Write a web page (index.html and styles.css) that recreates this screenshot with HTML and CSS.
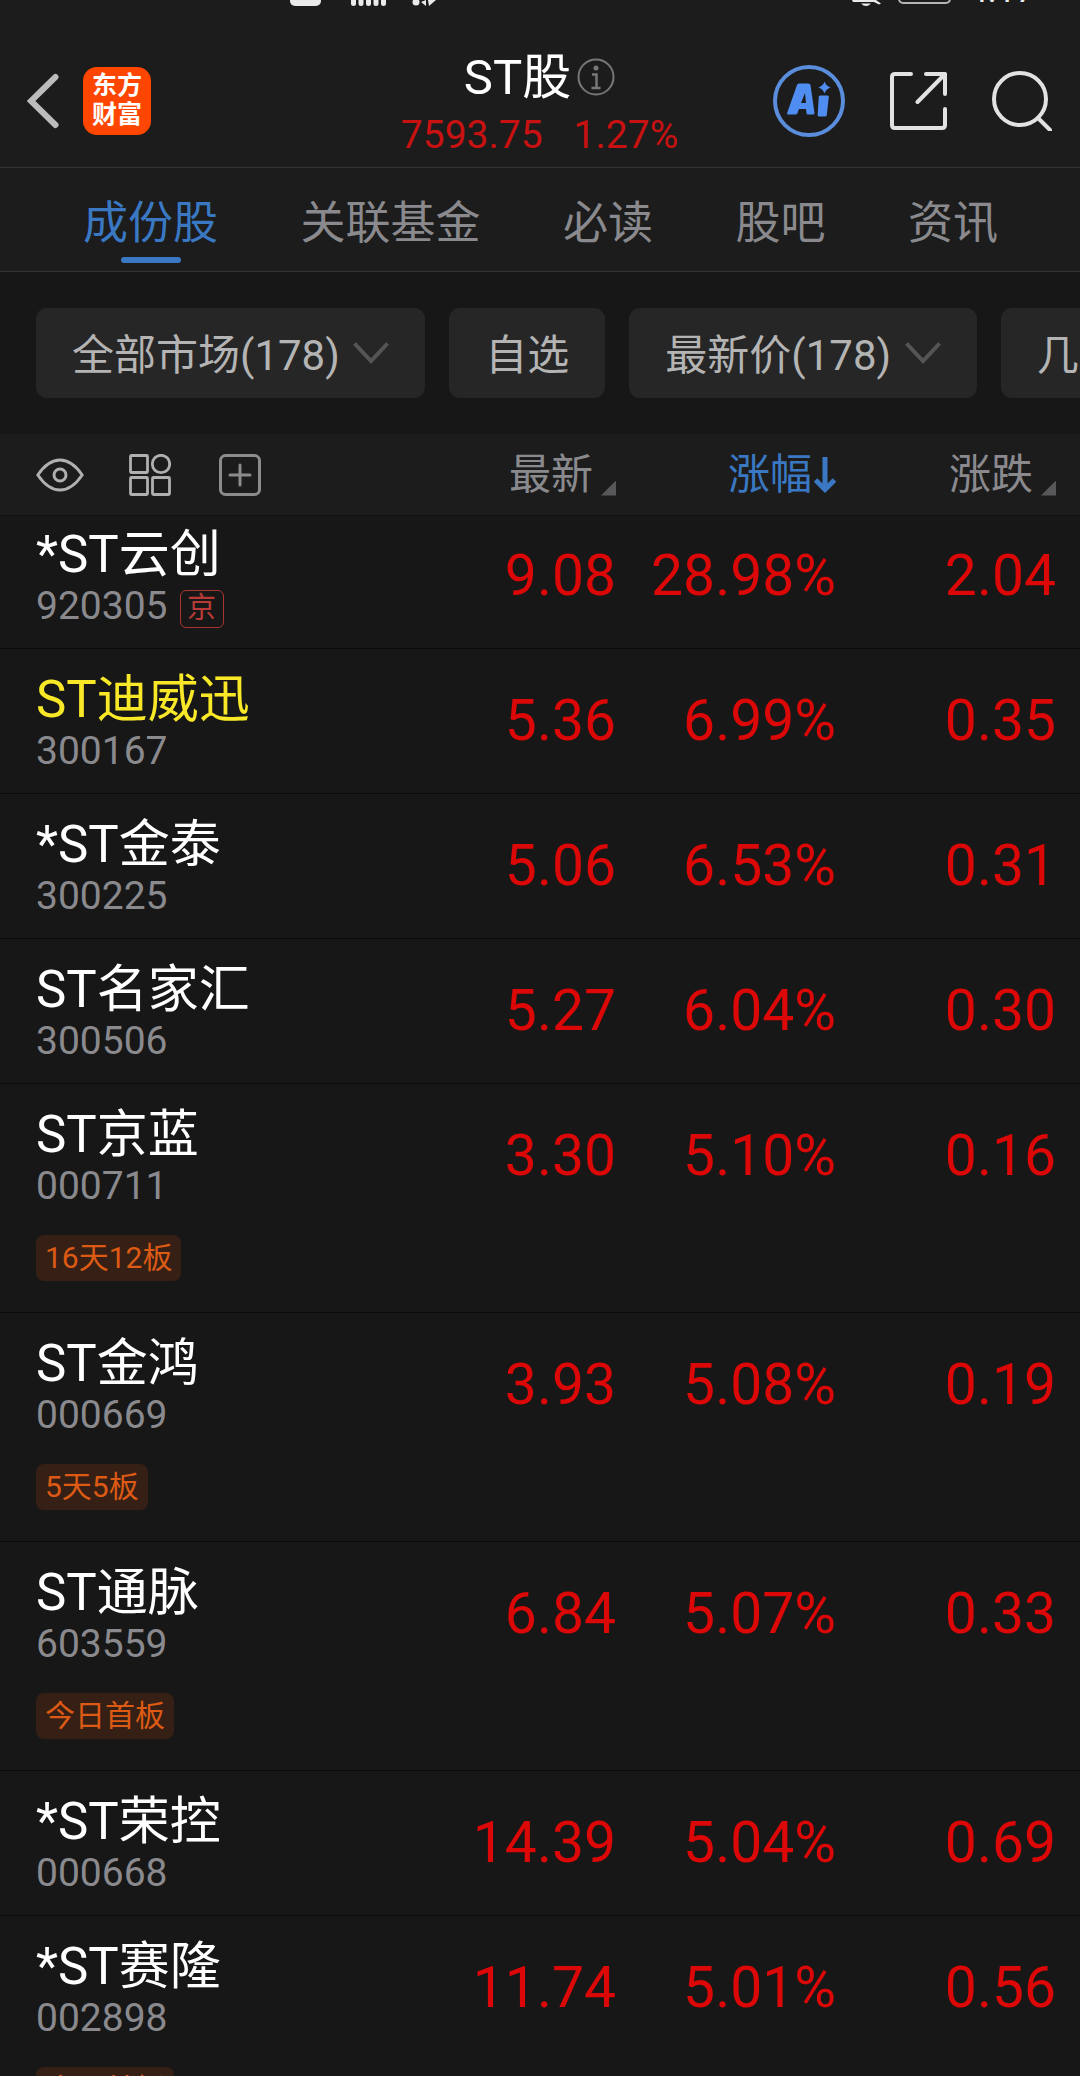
FILE: index.html
```html
<!DOCTYPE html>
<html lang="zh-CN">
<head>
    <meta charset="UTF-8">
    <title>ST股</title>
    <link rel="stylesheet" href="styles.css">
</head>
<body>

    <div class="statusbar">
        <svg class="status-left" width="160" height="10" viewBox="0 0 160 10">
            <rect x="0" y="-20" width="31" height="26" rx="5"/>
            <path d="M63.500 0v3.500M71 0v3.500M78.500 0v3.500M86 0v3.500M93.500 0v3.500" stroke="#eaeaea" stroke-width="5" stroke-linecap="round"/>
            <circle cx="126" cy="2" r="3.500"/>
            <path d="M131 2l5-2v6zM138 0h8l-7 6z"/>
        </svg>
        <svg class="status-right" width="102" height="10" viewBox="0 0 102 10">
            <path d="M0 0h24l5 3.500-2 1-5-2.500H1z"/>
            <path d="M9 3.500h10q-5 5-10 0z"/>
            <rect x="47" y="-20" width="51" height="23" rx="4" fill="none" stroke="#b5b5b5" stroke-width="2"/>
        </svg>
        <span class="clock">4:17</span>
    </div>

    <header class="header">
        <div class="header-left">
            <svg width="32" height="56" viewBox="0 0 32 56">
                <path d="M28.500 4L4 28l24.500 24" fill="none" stroke="#bcbcbc" stroke-width="6" stroke-linecap="round"/>
            </svg>
            <div class="logo"><span>东方</span><span>财富</span></div>
        </div>
        <div class="header-title">
            <div class="title">
                <span>ST股</span>
                <svg width="38" height="38" viewBox="0 0 38 38" fill="none" stroke="#777" stroke-width="2">
                    <circle cx="19" cy="19" r="17.500"/>
                    <circle cx="19" cy="10" r="2.500" fill="#777" stroke="none"/>
                    <path d="M15 16.500h4.500V30M14.500 30h9" stroke-width="2.500"/>
                </svg>
            </div>
            <div class="index"><span>7593.75</span><span>1.27%</span></div>
        </div>
        <div class="header-right">
            <svg width="74" height="74" viewBox="0 0 74 74">
                <circle cx="37" cy="37" r="34" fill="none" stroke="#5a8ddc" stroke-width="4"/>
                <path fill="#4f8df0" fill-rule="evenodd" d="M27 19.500h9.500q1.500 0 2 1.500l4 28q0 1.500-1.500 1.500h-5q-1.500 0-1.500-1.500l-.5-4h-7l-1.500 4q-.5 1.500-2 1.500h-7q-2 0-1.200-2L25 21q.5-1.500 2-1.500zM33 29l-4 10h5z"/>
                <path fill="#4f8df0" d="M48 31.500h7.500q1.500 0 1.300 1.500l-2 18q-.2 1.500-1.500 1.500H47q-1.500 0-1.300-1.500l1-18q.1-1.500 1.300-1.500zM52.500 17.500q1.500 4.500 6 6q-4.500 1.500-6 6q-1.500-4.500-6-6q4.500-1.500 6-6z"/>
            </svg>
            <svg width="58" height="58" viewBox="0 0 58 58" fill="none" stroke="#e2e2e2" stroke-width="4" stroke-linecap="round" stroke-linejoin="round">
                <path d="M21 2H5Q2 2 2 5V53Q2 56 5 56H52Q55 56 55 53V37"/>
                <path d="M36 2H55V22M55 2L27.500 30"/>
            </svg>
            <svg width="60" height="60" viewBox="0 0 60 60" fill="none" stroke="#e2e2e2" stroke-width="4" stroke-linecap="round">
                <circle cx="28" cy="28" r="26"/>
                <path d="M46 47l12 12"/>
            </svg>
        </div>
    </header>

    <nav class="tabs">
        <span class="tab active">成份股</span>
        <span class="tab">关联基金</span>
        <span class="tab">必读</span>
        <span class="tab">股吧</span>
        <span class="tab">资讯</span>
    </nav>

    <div class="filters">
        <div class="chip"><span>全部市场(178)</span>
            <svg width="36" height="22" viewBox="0 0 36 22"><path d="M1.500 1.500L18 19L34.500 1.500"/></svg>
        </div>
        <div class="chip"><span>自选</span></div>
        <div class="chip"><span>最新价(178)</span>
            <svg width="36" height="22" viewBox="0 0 36 22"><path d="M1.500 1.500L18 19L34.500 1.500"/></svg>
        </div>
        <div class="chip"><span>几</span></div>
    </div>

    <div class="row table-head">
        <div class="tools">
            <svg width="48" height="34" viewBox="0 0 48 34" fill="none" stroke="#b0b0b0" stroke-width="3">
                <path d="M1.800 17Q12 2 24 2T46.200 17Q36 32 24 32T1.800 17z" stroke-linejoin="round"/>
                <circle cx="24" cy="17" r="6"/>
            </svg>
            <svg width="42" height="42" viewBox="0 0 42 42" fill="none" stroke="#b0b0b0" stroke-width="2.800">
                <rect x="1.500" y="1.500" width="17" height="17" rx="1"/>
                <circle cx="32" cy="10" r="8.700"/>
                <rect x="1.500" y="23.500" width="17" height="17" rx="1"/>
                <rect x="23.500" y="23.500" width="17" height="17" rx="1"/>
            </svg>
            <svg class="add" width="42" height="42" viewBox="0 0 42 42" fill="none" stroke="#8c8c8c" stroke-width="3">
                <rect x="1.500" y="1.500" width="39" height="39" rx="5"/>
                <path d="M21 11v20M11 21h20" stroke-linecap="round"/>
            </svg>
        </div>
        <div class="col">最新<i class="corner"></i></div>
        <div class="col sorted">涨幅
            <svg width="22" height="36" viewBox="0 0 22 36" fill="none" stroke="#3a78c3" stroke-width="5">
                <path d="M11 0v32M1.500 23L11 32.500L20.500 23"/>
            </svg>
        </div>
        <div class="col">涨跌<i class="corner"></i></div>
    </div>

    <main class="list">
        <div class="row stock">
            <div class="info">
                <div class="name">*ST云创</div>
                <div class="code">920305<span class="market">京</span></div>
            </div>
            <div class="num">9.08</div>
            <div class="num">28.98%</div>
            <div class="num">2.04</div>
        </div>
        <div class="row stock">
            <div class="info">
                <div class="name own">ST迪威迅</div>
                <div class="code">300167</div>
            </div>
            <div class="num">5.36</div>
            <div class="num">6.99%</div>
            <div class="num">0.35</div>
        </div>
        <div class="row stock">
            <div class="info">
                <div class="name">*ST金泰</div>
                <div class="code">300225</div>
            </div>
            <div class="num">5.06</div>
            <div class="num">6.53%</div>
            <div class="num">0.31</div>
        </div>
        <div class="row stock">
            <div class="info">
                <div class="name">ST名家汇</div>
                <div class="code">300506</div>
            </div>
            <div class="num">5.27</div>
            <div class="num">6.04%</div>
            <div class="num">0.30</div>
        </div>
        <div class="row stock">
            <div class="info">
                <div class="name">ST京蓝</div>
                <div class="code">000711</div>
                <div class="tag">16天12板</div>
            </div>
            <div class="num">3.30</div>
            <div class="num">5.10%</div>
            <div class="num">0.16</div>
        </div>
        <div class="row stock">
            <div class="info">
                <div class="name">ST金鸿</div>
                <div class="code">000669</div>
                <div class="tag">5天5板</div>
            </div>
            <div class="num">3.93</div>
            <div class="num">5.08%</div>
            <div class="num">0.19</div>
        </div>
        <div class="row stock">
            <div class="info">
                <div class="name">ST通脉</div>
                <div class="code">603559</div>
                <div class="tag">今日首板</div>
            </div>
            <div class="num">6.84</div>
            <div class="num">5.07%</div>
            <div class="num">0.33</div>
        </div>
        <div class="row stock">
            <div class="info">
                <div class="name">*ST荣控</div>
                <div class="code">000668</div>
            </div>
            <div class="num">14.39</div>
            <div class="num">5.04%</div>
            <div class="num">0.69</div>
        </div>
        <div class="row stock">
            <div class="info">
                <div class="name">*ST赛隆</div>
                <div class="code">002898</div>
                <div class="tag">今日首板</div>
            </div>
            <div class="num">11.74</div>
            <div class="num">5.01%</div>
            <div class="num">0.56</div>
        </div>
    </main>

</body>
</html>
```
FILE: styles.css
```css
* {
    box-sizing: border-box;
}

body {
    margin: 0;
    height: 2076px;
    overflow: hidden;
    display: flex;
    flex-direction: column;
    background-color: #171717;
    color: #fff;
    font-family: Roboto, "Noto Sans CJK SC", sans-serif;
}

body > * {
    flex-shrink: 0;
}

svg {
    display: block;
    flex-shrink: 0;
}

/* status bar, scrolled almost out of view */
.statusbar {
    height: 34px;
    padding-left: 290px;
    display: flex;
    align-items: flex-start;
    background-color: #1c1c1c;
    fill: #eaeaea;
    overflow: hidden;
}

.status-right {
    margin-left: 402px;
}

.clock {
    margin: -29px 0 0 14px;
    font-size: 35px;
    line-height: 40px;
    color: #eaeaea;
}

.header {
    height: 134px;
    padding: 0 28px 0 27px;
    display: grid;
    grid-template-columns: 1fr auto 1fr;
    background-color: #1c1c1c;
    border-bottom: 1px solid #333;
}

.header-left {
    display: flex;
    align-items: center;
    gap: 24px;
}

.logo {
    width: 68px;
    height: 68px;
    padding-top: 4px;
    border-radius: 14px;
    background-color: #ff4600;
    display: flex;
    flex-direction: column;
    align-items: center;
    font-size: 25px;
    font-weight: 700;
    line-height: 29px;
}

.header-title {
    display: flex;
    flex-direction: column;
    align-items: center;
}

.title {
    height: 85px;
    display: flex;
    align-items: center;
    gap: 6px;
    font-size: 49px;
    line-height: 85px;
}

.title span {
    padding-top: 2px;
}

.index {
    display: flex;
    gap: 31px;
    font-size: 39px;
    line-height: 32px;
    color: #c81212;
}

.header-right {
    display: flex;
    align-items: center;
    justify-content: flex-end;
    gap: 44px;
}

.tabs {
    height: 104px;
    padding-left: 83px;
    display: flex;
    gap: 82.5px;
    background-color: #1c1c1c;
    border-bottom: 1px solid #333;
    font-size: 45px;
    line-height: 111px;
    color: #8a8a8e;
}

.tab {
    position: relative;
    height: 103px;
}

.tab.active {
    color: #3a78c3;
}

.tab.active::after {
    content: "";
    position: absolute;
    left: 50%;
    bottom: 8px;
    width: 60px;
    height: 6px;
    margin-left: -30px;
    border-radius: 3px;
    background-color: #3a78c3;
}

.filters {
    height: 162px;
    padding: 36px 0 36px 36px;
    display: flex;
    gap: 24px;
    overflow: hidden;
}

.chip {
    height: 90px;
    padding: 0 36px;
    display: flex;
    align-items: center;
    flex-shrink: 0;
    gap: 13.5px;
    border-radius: 11px;
    background-color: #262626;
    color: #b4b4b4;
    font-size: 42px;
    line-height: 88px;
    white-space: nowrap;
}

.chip span {
    padding-top: 5px;
}

.chip svg {
    fill: none;
    stroke: #555;
    stroke-width: 4;
}

.row {
    padding: 0 24px 0 36px;
    display: grid;
    grid-template-columns: 1fr 240px 220px 220px;
}

.table-head {
    height: 82px;
    position: relative;
    z-index: 1;
    background-color: #1c1c1c;
    border-bottom: 1px solid #111;
    color: #8a8a8e;
    font-size: 42px;
    line-height: 80px;
}

.tools {
    display: flex;
    align-items: center;
    gap: 45px;
}

.add {
    margin-left: 3px;
}

.col {
    display: flex;
    justify-content: flex-end;
    align-items: center;
    gap: 3px;
}

.sorted {
    gap: 2px;
    color: #3a78c3;
}

.corner {
    width: 15px;
    height: 15px;
    margin: 27px 0 0 5px;
    background-color: #58585a;
    clip-path: polygon(100% 0, 100% 100%, 0 100%);
}

/* first row is partly under the table head */
.list {
    margin-top: -12px;
}

.stock {
    min-height: 145px;
    border-bottom: 1px solid #0b0b0b;
}

.name {
    height: 59px;
    margin-top: 21px;
    font-size: 51px;
    line-height: 60px;
    white-space: nowrap;
}

.own {
    color: #f8e827;
}

.code {
    height: 44px;
    display: flex;
    align-items: center;
    font-size: 39px;
    line-height: 44px;
    color: #8a8a8e;
}

.market {
    width: 44px;
    height: 38px;
    margin: 6px 0 0 12px;
    border: 1px solid #a83430;
    border-radius: 6px;
    font-size: 29px;
    line-height: 35px;
    text-align: center;
    color: #b83a36;
}

.tag {
    width: max-content;
    height: 46px;
    margin: 27px 0 31px;
    padding: 0 9px;
    border-radius: 8px;
    background-color: #362015;
    color: #dc5a14;
    font-size: 30px;
    line-height: 46px;
}

.num {
    padding-top: 42px;
    font-size: 57px;
    line-height: 60px;
    text-align: right;
    color: #dc0707;
}
```
